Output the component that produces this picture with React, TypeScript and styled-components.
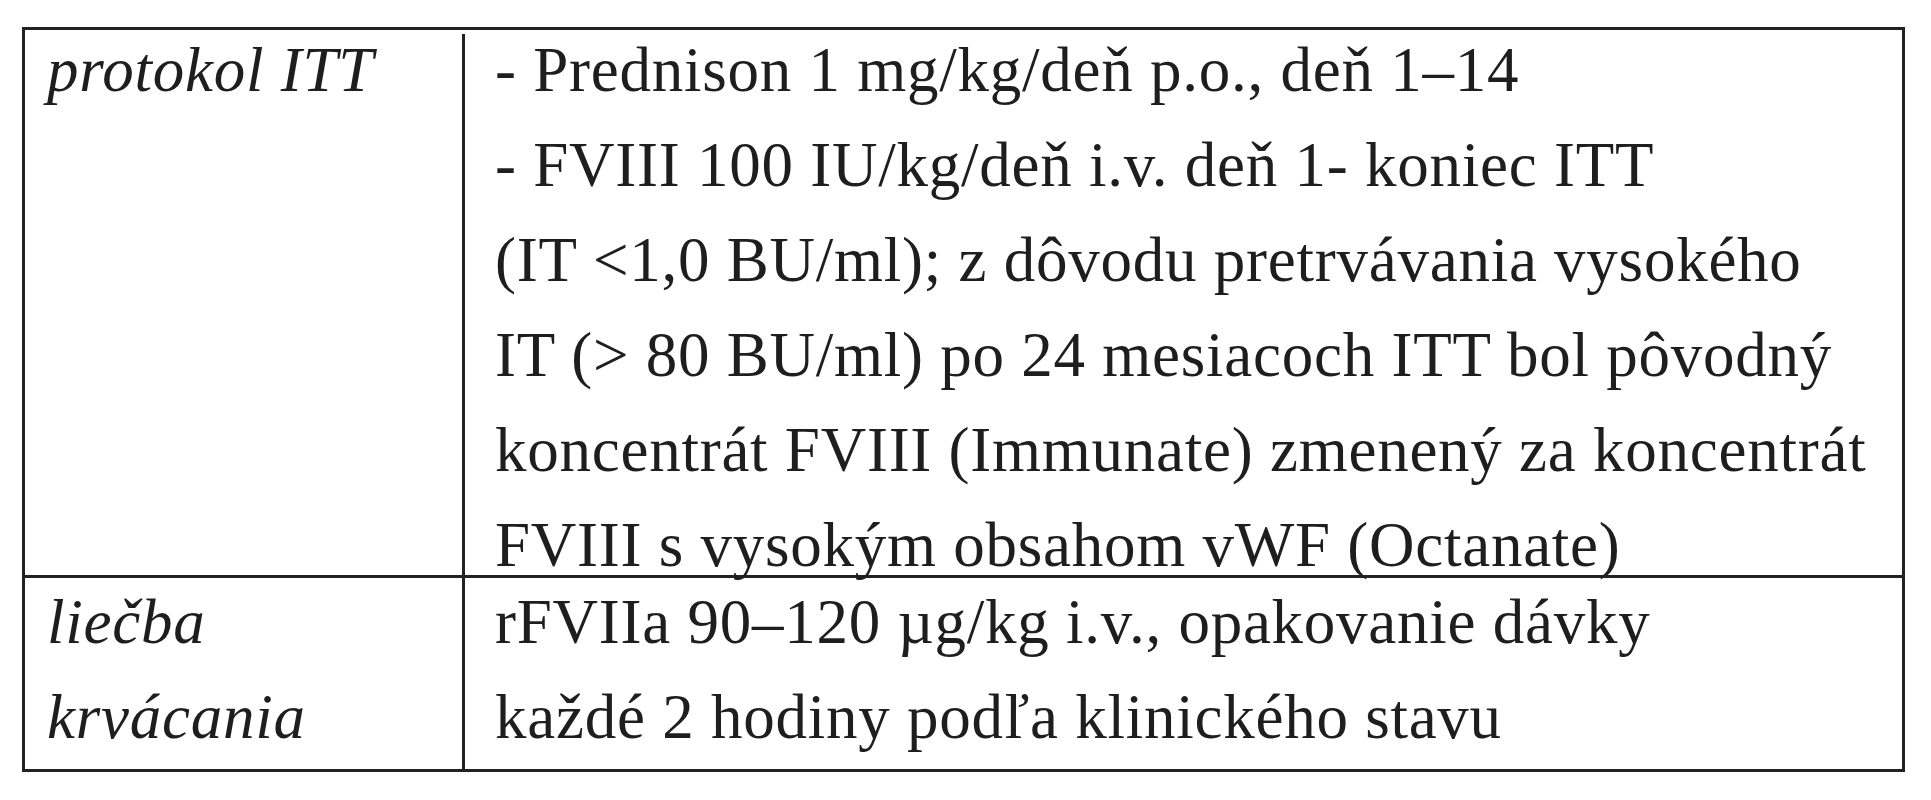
import React from 'react';
import styled, { createGlobalStyle } from 'styled-components';

const GlobalStyle = createGlobalStyle`
  html, body {
    margin: 0;
    padding: 0;
    background: #ffffff;
  }
  body {
    font-family: "Liberation Serif", "Times New Roman", serif;
    color: #1e1e1e;
  }
`;

const Page = styled.div`
  width: 1931px;
  height: 800px;
  padding: 27px 0 0 22px;
  box-sizing: border-box;
  background: #fff;
`;

const Table = styled.div`
  width: 1883px;
  border: 3px solid #222;
  box-sizing: border-box;
`;

const Row = styled.div<{ $height: number; $divided?: boolean }>`
  display: grid;
  grid-template-columns: 437px 1fr;
  height: ${(p) => p.$height}px;
  border-top: ${(p) => (p.$divided ? '3px solid #222' : 'none')};
`;

const LabelCell = styled.div<{ $shift: number }>`
  padding-left: 22px;
  font-style: italic;
  font-size: 63px;
  line-height: 95px;
  margin-top: ${(p) => p.$shift}px;
`;

const ContentCell = styled.div<{ $gap: number; $shift: number }>`
  border-left: 3px solid #222;
  margin-top: ${(p) => p.$gap}px;
  padding-left: 30px;
  font-size: 63px;
  line-height: 95px;

  & > div {
    margin-top: ${(p) => p.$shift - p.$gap}px;
  }
`;

const Line = styled.div`
  white-space: nowrap;
  letter-spacing: 0.75px;
`;

const rows = [
  {
    label: ['protokol ITT'],
    height: 545,
    gap: 4,
    shift: -7,
    lines: [
      '- Prednison 1 mg/kg/deň p.o., deň 1–14',
      '- FVIII 100 IU/kg/deň i.v. deň 1- koniec ITT',
      '(IT <1,0 BU/ml); z dôvodu pretrvávania vysokého',
      'IT (> 80 BU/ml) po 24 mesiacoch ITT bol pôvodný',
      'koncentrát FVIII (Immunate) zmenený za koncentrát',
      'FVIII s vysokým obsahom vWF (Octanate)',
    ],
  },
  {
    label: ['liečba', 'krvácania'],
    height: 191,
    gap: 0,
    shift: -3,
    lines: [
      'rFVIIa 90–120 µg/kg i.v., opakovanie dávky',
      'každé 2 hodiny podľa klinického stavu',
    ],
  },
];

const App = () => {
  return (
    <>
      <GlobalStyle />
      <Page>
        <Table>
          {rows.map((row, i) => (
            <Row key={i} $height={row.height} $divided={i > 0}>
              <LabelCell $shift={row.shift}>
                {row.label.map((l) => (
                  <Line key={l}>{l}</Line>
                ))}
              </LabelCell>
              <ContentCell $gap={row.gap} $shift={row.shift}>
                <div>
                  {row.lines.map((l) => (
                    <Line key={l}>{l}</Line>
                  ))}
                </div>
              </ContentCell>
            </Row>
          ))}
        </Table>
      </Page>
    </>
  );
};

export default App;
